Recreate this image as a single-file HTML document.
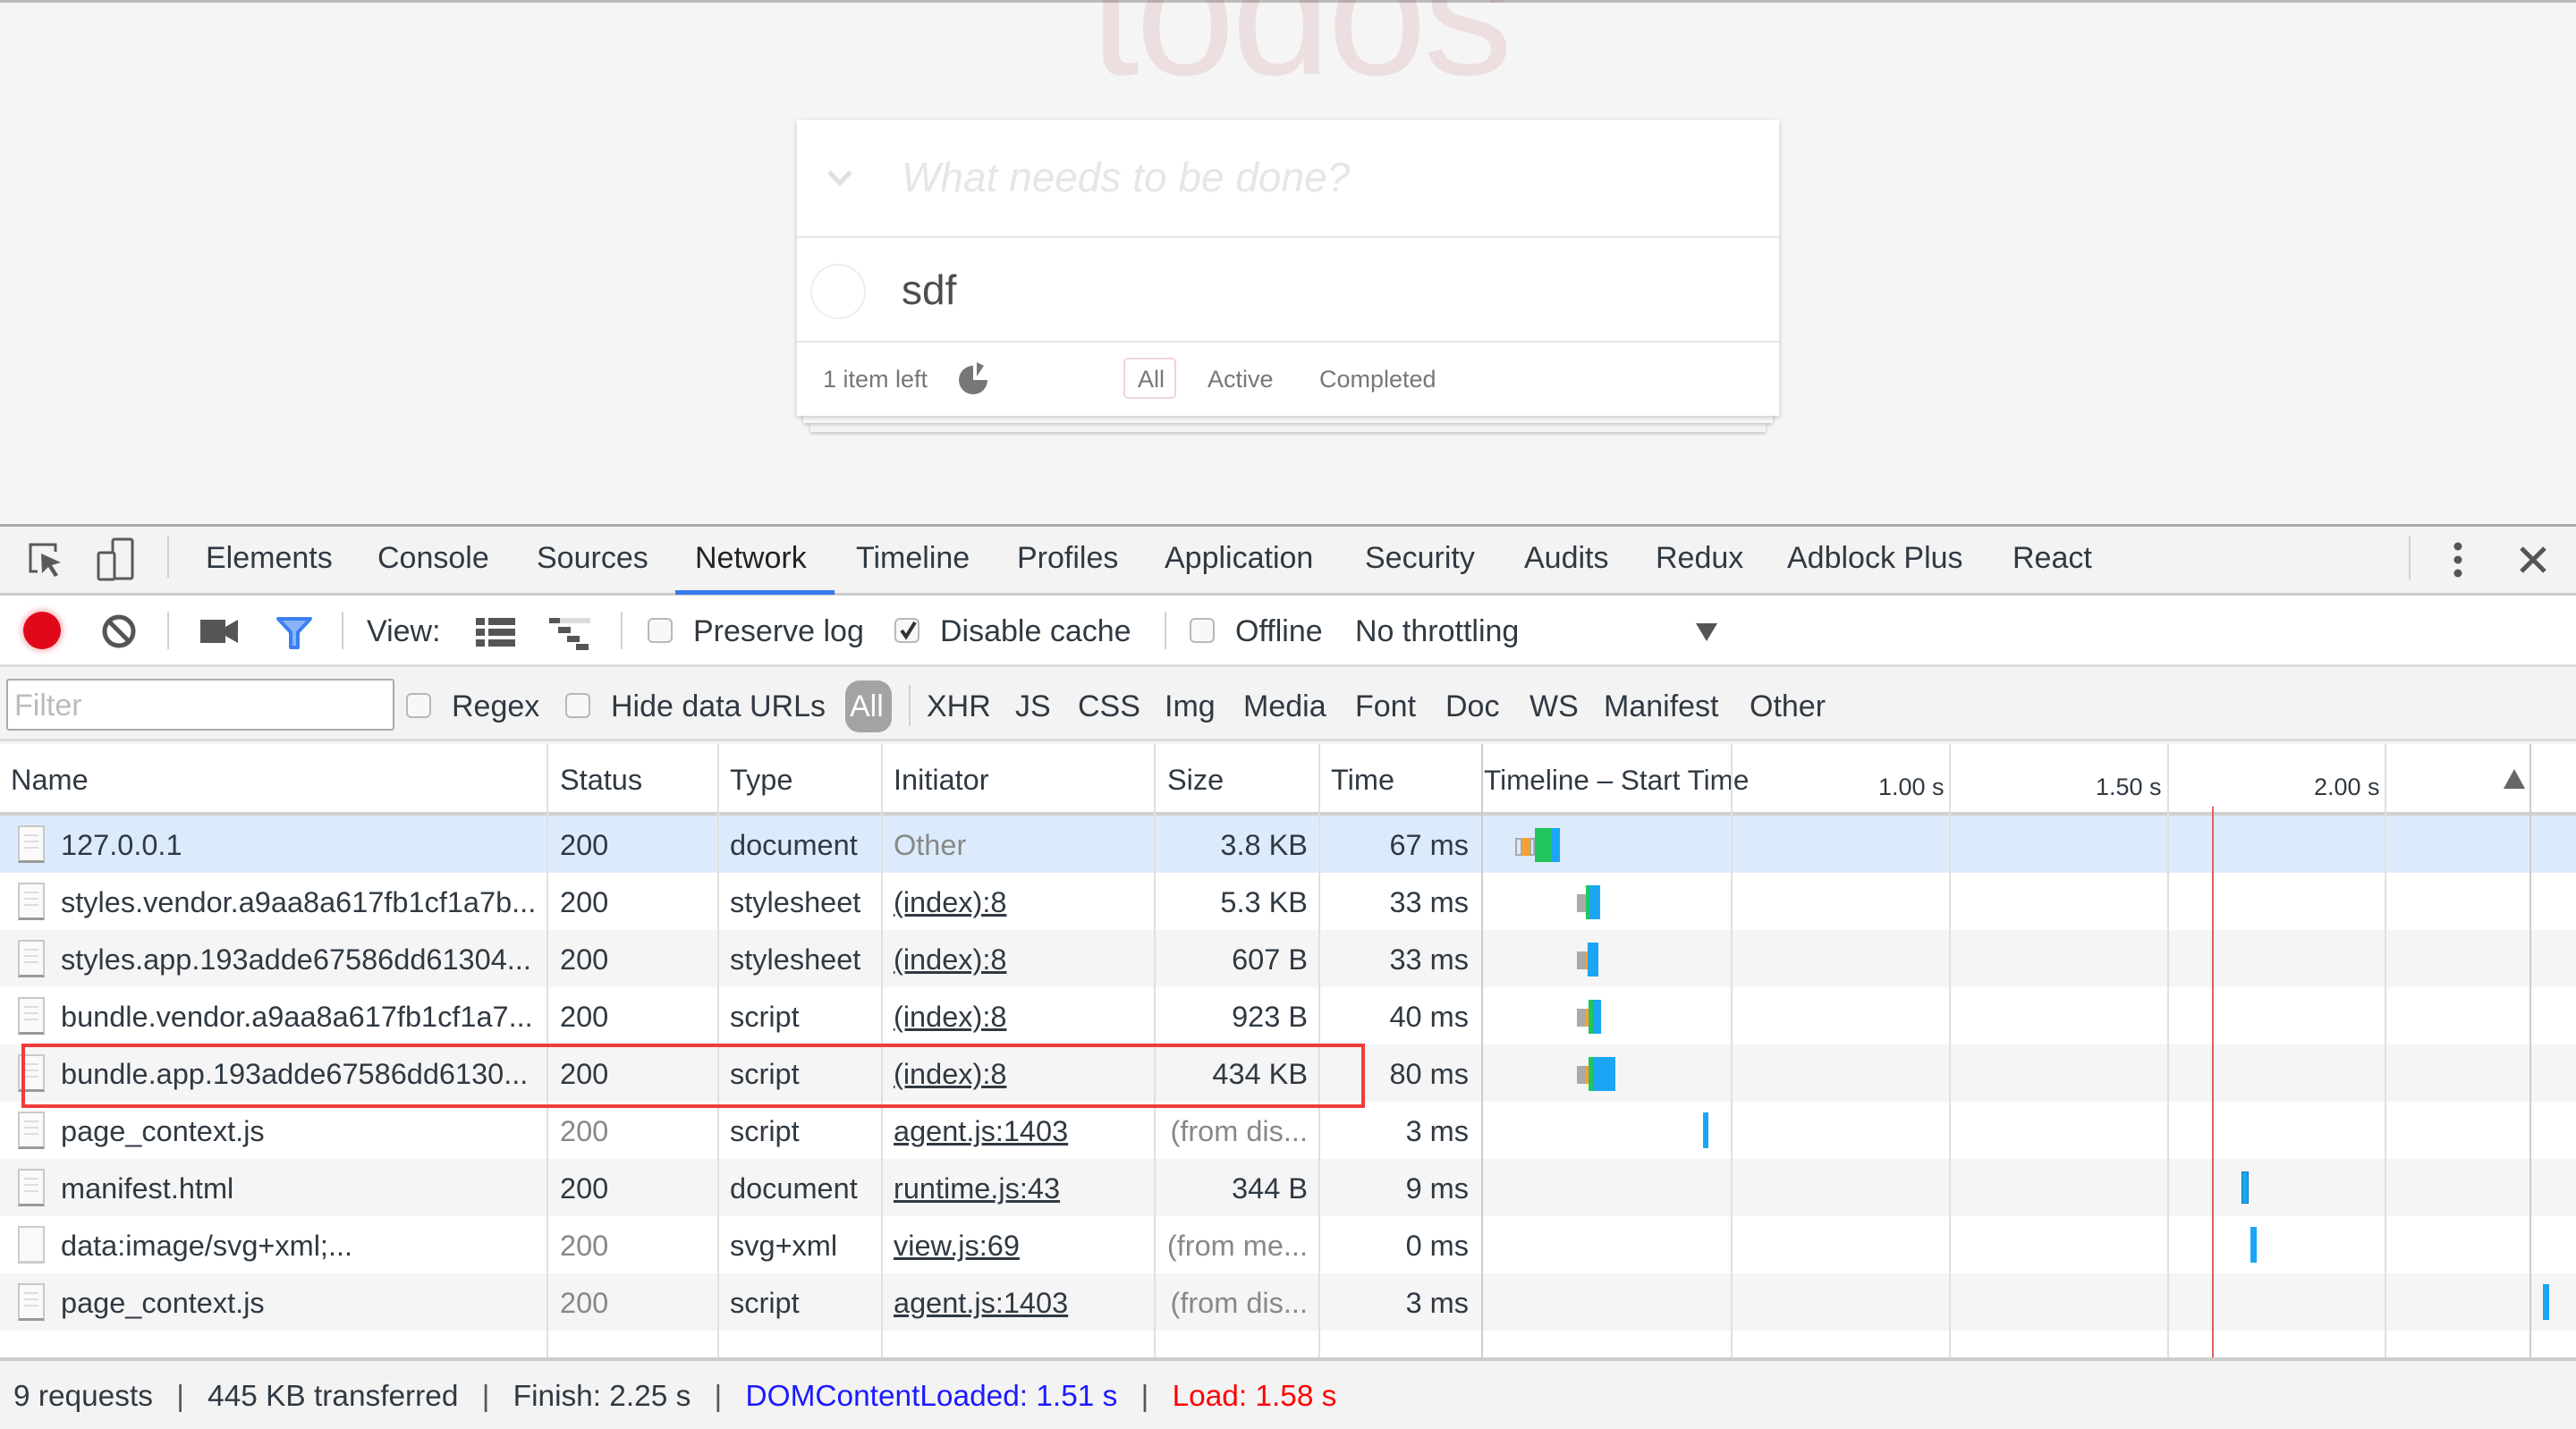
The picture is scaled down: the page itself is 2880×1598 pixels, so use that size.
<!DOCTYPE html>
<html><head><meta charset="utf-8">
<style>
*{margin:0;padding:0;box-sizing:border-box}
body{width:2880px;height:1598px;position:relative;overflow:hidden;background:#f5f5f5;font-family:"Liberation Sans",Helvetica,Arial,sans-serif;color:#303942}
.a{position:absolute;white-space:nowrap}
.t{font-size:34px;color:#303942}
.row{position:absolute;left:0;width:2880px;height:64px}
.c{position:absolute;top:1px;line-height:64px;font-size:32.5px;white-space:nowrap}
.u{text-decoration:underline}
.r{text-align:right}
.vl{position:absolute;width:2px;background:#e0e0e0}
.cb{position:absolute;width:28px;height:28px;border:2px solid #b8b8b8;border-radius:6px;background:#f8f8f8}
.sep{position:absolute;width:2px;background:#d0d0d0}
.doc{position:absolute;left:20px;top:11px;width:30px;height:42px;border:2px solid #c8c8c8;border-bottom:3px solid #999;background:#fafafa}
.doc i{position:absolute;left:5px;right:5px;height:2px;background:#ddd}
.bar{position:absolute}
</style></head><body>
<div class="a" style="left:0;top:0;width:2880px;height:3px;background:#bbb"></div>
<div class="a" style="left:1218px;top:-100px;font-size:200px;font-weight:100;color:rgba(175,47,47,0.11);letter-spacing:-4px;font-family:'Liberation Sans',sans-serif">todos</div>
<div class="a" style="left:906px;top:455px;width:1068px;height:28px;background:#f6f6f6;box-shadow:0 2px 4px rgba(0,0,0,.2)"></div>
<div class="a" style="left:898px;top:445px;width:1084px;height:28px;background:#fafafa;box-shadow:0 2px 4px rgba(0,0,0,.2)"></div>
<div class="a" style="left:891px;top:134px;width:1098px;height:331px;background:#fff;box-shadow:0 2px 6px rgba(0,0,0,.2)"></div>
<div class="a" style="left:891px;top:264px;width:1098px;height:2px;background:#e6e6e6"></div>
<div class="a" style="left:891px;top:381px;width:1098px;height:2px;background:#e6e6e6"></div>
<svg class="a" style="left:924px;top:188px" width="30" height="22"><path d="M3 4 L15 17 L27 4" stroke="#e0e0e0" stroke-width="5" fill="none"/></svg>
<div class="a" style="left:1008px;top:171px;font-size:46px;font-style:italic;font-weight:300;color:#e6e6e6">What needs to be done?</div>
<div class="a" style="left:906px;top:295px;width:62px;height:62px;border:2px solid #ededed;border-radius:50%"></div>
<div class="a" style="left:1008px;top:297px;font-size:46px;color:#4d4d4d">sdf</div>
<div class="a" style="left:920px;top:409px;font-size:27px;color:#777">1 item left</div>
<svg class="a" style="left:1070px;top:403px" width="40" height="42"><path d="M18 6 A16 16 0 1 0 34 22 L18 22 Z" fill="#777"/><path d="M22 2 L30 6 L22 18 Z" fill="#777"/></svg>
<div class="a" style="left:1256px;top:400px;width:59px;height:46px;border:2px solid rgba(175,47,47,.2);border-radius:5px"></div>
<div class="a" style="left:1272px;top:409px;font-size:27px;color:#777">All</div>
<div class="a" style="left:1350px;top:409px;font-size:27px;color:#777">Active</div>
<div class="a" style="left:1475px;top:409px;font-size:27px;color:#777">Completed</div>

<div class="a" style="left:0;top:586px;width:2880px;height:80px;background:#f3f3f3;border-top:3px solid #a8a8a8;border-bottom:3px solid #ccc"></div>
<svg class="a" style="left:28px;top:603px" width="46" height="48"><path d="M14 36 H6 V6 H34 V14" stroke="#5a5a5a" stroke-width="3" fill="none"/><path d="M18 16 L40 26 L30 29 L37 40 L33 42 L26 31 L19 38 Z" fill="#5a5a5a"/></svg>
<svg class="a" style="left:106px;top:600px" width="50" height="52"><rect x="20" y="3" width="22" height="44" rx="2" stroke="#5a5a5a" stroke-width="3" fill="none"/><rect x="4" y="18" width="18" height="30" rx="2" stroke="#5a5a5a" stroke-width="3" fill="#f3f3f3"/></svg>
<div class="sep" style="left:187px;top:600px;height:46px"></div>
<div class="a t" style="left:230px;top:605px">Elements</div>
<div class="a t" style="left:422px;top:605px">Console</div>
<div class="a t" style="left:600px;top:605px">Sources</div>
<div class="a t" style="left:777px;top:605px;color:#222">Network</div>
<div class="a" style="left:755px;top:660px;width:178px;height:5px;background:#3879f0"></div>
<div class="a t" style="left:957px;top:605px">Timeline</div>
<div class="a t" style="left:1137px;top:605px">Profiles</div>
<div class="a t" style="left:1302px;top:605px">Application</div>
<div class="a t" style="left:1526px;top:605px">Security</div>
<div class="a t" style="left:1704px;top:605px">Audits</div>
<div class="a t" style="left:1851px;top:605px">Redux</div>
<div class="a t" style="left:1998px;top:605px">Adblock Plus</div>
<div class="a t" style="left:2250px;top:605px">React</div>
<div class="sep" style="left:2693px;top:600px;height:48px"></div>
<svg class="a" style="left:2738px;top:604px" width="20" height="44"><circle cx="10" cy="7" r="4.5" fill="#555"/><circle cx="10" cy="22" r="4.5" fill="#555"/><circle cx="10" cy="37" r="4.5" fill="#555"/></svg>
<svg class="a" style="left:2815px;top:609px" width="34" height="34"><path d="M4 4 L30 30 M30 4 L4 30" stroke="#555" stroke-width="5"/></svg>

<div class="a" style="left:0;top:666px;width:2880px;height:80px;background:#fff;border-bottom:3px solid #ddd"></div>
<div class="a" style="left:26px;top:684px;width:42px;height:42px;border-radius:50%;background:#e0091a;box-shadow:0 0 6px 3px rgba(224,9,26,.25)"></div>
<svg class="a" style="left:112px;top:685px" width="42" height="42"><circle cx="21" cy="21" r="16" stroke="#555" stroke-width="5" fill="none"/><path d="M10 10 L32 32" stroke="#555" stroke-width="5"/></svg>
<div class="sep" style="left:187px;top:684px;height:42px"></div>
<svg class="a" style="left:224px;top:691px" width="44" height="30"><rect x="0" y="2" width="28" height="26" fill="#555"/><path d="M28 10 L42 2 V28 L28 20 Z" fill="#555"/></svg>
<svg class="a" style="left:308px;top:689px" width="42" height="38"><path d="M3 3 H39 L25 18 V35 H17 V18 Z" fill="#8ab4f8" stroke="#3b7ff0" stroke-width="4" stroke-linejoin="round"/></svg>
<div class="sep" style="left:382px;top:684px;height:42px"></div>
<div class="a t" style="left:410px;top:687px">View:</div>
<svg class="a" style="left:532px;top:691px" width="44" height="32"><g fill="#555"><rect x="0" y="0" width="10" height="8"/><rect x="14" y="0" width="30" height="8"/><rect x="0" y="12" width="10" height="8"/><rect x="14" y="12" width="30" height="8"/><rect x="0" y="24" width="10" height="8"/><rect x="14" y="24" width="30" height="8"/></g></svg>
<svg class="a" style="left:614px;top:691px" width="46" height="36"><rect x="0" y="0" width="46" height="6" fill="#ddd"/><rect x="0" y="0" width="12" height="6" fill="#555"/><rect x="10" y="10" width="14" height="7" fill="#555"/><rect x="20" y="20" width="14" height="7" fill="#555"/><rect x="30" y="29" width="14" height="7" fill="#555"/></svg>
<div class="sep" style="left:694px;top:684px;height:42px"></div>
<div class="cb" style="left:724px;top:691px"></div>
<div class="a t" style="left:775px;top:687px">Preserve log</div>
<div class="cb" style="left:1000px;top:691px"></div>
<svg class="a" style="left:1002px;top:691px" width="28" height="28"><path d="M6 14 L11 21 L21 5" stroke="#333" stroke-width="4" fill="none"/></svg>
<div class="a t" style="left:1051px;top:687px">Disable cache</div>
<div class="sep" style="left:1302px;top:684px;height:42px"></div>
<div class="cb" style="left:1330px;top:691px"></div>
<div class="a t" style="left:1381px;top:687px">Offline</div>
<div class="a t" style="left:1515px;top:687px">No throttling</div>
<svg class="a" style="left:1896px;top:697px" width="24" height="20"><path d="M0 0 H24 L12 20 Z" fill="#555"/></svg>

<div class="a" style="left:0;top:749px;width:2880px;height:80px;background:#f3f3f3;border-bottom:3px solid #ddd"></div>
<div class="a" style="left:7px;top:759px;width:434px;height:58px;background:#fff;border:2px solid #aaa;border-radius:3px"></div>
<div class="a" style="left:16px;top:770px;font-size:34px;color:#bbb">Filter</div>
<div class="cb" style="left:454px;top:775px"></div>
<div class="a t" style="left:505px;top:771px">Regex</div>
<div class="cb" style="left:632px;top:775px"></div>
<div class="a t" style="left:683px;top:771px">Hide data URLs</div>
<div class="a" style="left:945px;top:761px;width:52px;height:58px;border-radius:16px;background:#a3a3a3"></div>
<div class="a t" style="left:950px;top:771px;color:#fff">All</div>
<div class="sep" style="left:1016px;top:766px;height:46px"></div>
<div class="a t" style="left:1036px;top:771px">XHR</div>
<div class="a t" style="left:1135px;top:771px">JS</div>
<div class="a t" style="left:1205px;top:771px">CSS</div>
<div class="a t" style="left:1302px;top:771px">Img</div>
<div class="a t" style="left:1390px;top:771px">Media</div>
<div class="a t" style="left:1515px;top:771px">Font</div>
<div class="a t" style="left:1616px;top:771px">Doc</div>
<div class="a t" style="left:1710px;top:771px">WS</div>
<div class="a t" style="left:1793px;top:771px">Manifest</div>
<div class="a t" style="left:1956px;top:771px">Other</div>

<div class="a" style="left:0;top:832px;width:2880px;height:688px;background:#fff"></div>
<div class="a" style="left:0;top:908px;width:2880px;height:4px;background:#d0d0d0"></div>
<div class="a t" style="left:12px;top:854px;font-size:32.5px">Name</div>
<div class="a t" style="left:626px;top:854px;font-size:32.5px">Status</div>
<div class="a t" style="left:816px;top:854px;font-size:32.5px">Type</div>
<div class="a t" style="left:999px;top:854px;font-size:32.5px">Initiator</div>
<div class="a t" style="left:1305px;top:854px;font-size:32.5px">Size</div>
<div class="a t" style="left:1488px;top:854px;font-size:32.5px">Time</div>
<div class="a t" style="left:1659px;top:854px;font-size:31.5px">Timeline – Start Time</div>
<div class="a" style="left:2100px;top:865px;font-size:27px;width:73px;text-align:right">1.00 s</div>
<div class="a" style="left:2343px;top:865px;font-size:27px;width:73px;text-align:right">1.50 s</div>
<div class="a" style="left:2587px;top:865px;font-size:27px;width:73px;text-align:right">2.00 s</div>
<svg class="a" style="left:2799px;top:860px" width="24" height="22"><path d="M12 0 L24 22 H0 Z" fill="#666"/></svg>

<div class="row" style="top:912px;background:#dcebfc"></div>
<div class="row" style="top:976px;background:#fff"></div>
<div class="row" style="top:1040px;background:#f5f5f5"></div>
<div class="row" style="top:1104px;background:#fff"></div>
<div class="row" style="top:1168px;background:#f5f5f5"></div>
<div class="row" style="top:1232px;background:#fff"></div>
<div class="row" style="top:1296px;background:#f5f5f5"></div>
<div class="row" style="top:1360px;background:#fff"></div>
<div class="row" style="top:1424px;background:#f5f5f5"></div>

<div class="vl" style="left:611px;top:832px;height:688px"></div>
<div class="vl" style="left:802px;top:832px;height:688px"></div>
<div class="vl" style="left:985px;top:832px;height:688px"></div>
<div class="vl" style="left:1290px;top:832px;height:688px"></div>
<div class="vl" style="left:1474px;top:832px;height:688px"></div>
<div class="vl" style="left:1656px;top:832px;height:688px;background:#ccc"></div>
<div class="vl" style="left:1935px;top:832px;height:688px"></div>
<div class="vl" style="left:2179px;top:832px;height:688px"></div>
<div class="vl" style="left:2423px;top:832px;height:688px"></div>
<div class="vl" style="left:2666px;top:832px;height:688px"></div>
<div class="vl" style="left:2828px;top:832px;height:688px;background:#ccc"></div>
<div class="a" style="left:2473px;top:902px;width:2px;height:618px;background:#e06060"></div>

<div class="row" style="top:912px">
<div class="doc"><i style="top:8px"></i><i style="top:15px"></i><i style="top:22px"></i></div>
<div class="c" style="left:68px">127.0.0.1</div><div class="c" style="left:626px">200</div><div class="c" style="left:816px">document</div><div class="c" style="left:999px;color:#888">Other</div><div class="c r" style="left:1300px;width:162px">3.8 KB</div><div class="c r" style="left:1480px;width:162px">67 ms</div>
<div class="bar" style="left:1694px;top:25px;width:8px;height:20px;border:2px solid #aaa"></div><div class="bar" style="left:1702px;top:25px;width:8px;height:20px;background:#f7a030"></div><div class="bar" style="left:1710px;top:25px;width:6px;height:20px;border:2px solid #aaa"></div><div class="bar" style="left:1716px;top:14px;width:19px;height:38px;background:#22c55e"></div><div class="bar" style="left:1735px;top:14px;width:9px;height:38px;background:#1aa6f5"></div>
</div>
<div class="row" style="top:976px">
<div class="doc"><i style="top:8px"></i><i style="top:15px"></i><i style="top:22px"></i></div>
<div class="c" style="left:68px">styles.vendor.a9aa8a617fb1cf1a7b...</div><div class="c" style="left:626px">200</div><div class="c" style="left:816px">stylesheet</div><div class="c u" style="left:999px">(index):8</div><div class="c r" style="left:1300px;width:162px">5.3 KB</div><div class="c r" style="left:1480px;width:162px">33 ms</div>
<div class="bar" style="left:1763px;top:24px;width:10px;height:20px;background:#aaa"></div><div class="bar" style="left:1773px;top:14px;width:4px;height:38px;background:#22c55e"></div><div class="bar" style="left:1777px;top:14px;width:12px;height:38px;background:#1aa6f5"></div>
</div>
<div class="row" style="top:1040px">
<div class="doc"><i style="top:8px"></i><i style="top:15px"></i><i style="top:22px"></i></div>
<div class="c" style="left:68px">styles.app.193adde67586dd61304...</div><div class="c" style="left:626px">200</div><div class="c" style="left:816px">stylesheet</div><div class="c u" style="left:999px">(index):8</div><div class="c r" style="left:1300px;width:162px">607 B</div><div class="c r" style="left:1480px;width:162px">33 ms</div>
<div class="bar" style="left:1763px;top:24px;width:10px;height:20px;background:#aaa"></div><div class="bar" style="left:1773px;top:24px;width:2px;height:20px;background:#f7a030"></div><div class="bar" style="left:1775px;top:14px;width:12px;height:38px;background:#1aa6f5"></div>
</div>
<div class="row" style="top:1104px">
<div class="doc"><i style="top:8px"></i><i style="top:15px"></i><i style="top:22px"></i></div>
<div class="c" style="left:68px">bundle.vendor.a9aa8a617fb1cf1a7...</div><div class="c" style="left:626px">200</div><div class="c" style="left:816px">script</div><div class="c u" style="left:999px">(index):8</div><div class="c r" style="left:1300px;width:162px">923 B</div><div class="c r" style="left:1480px;width:162px">40 ms</div>
<div class="bar" style="left:1763px;top:24px;width:10px;height:20px;background:#aaa"></div><div class="bar" style="left:1773px;top:24px;width:3px;height:20px;background:#f7a030"></div><div class="bar" style="left:1776px;top:14px;width:5px;height:38px;background:#22c55e"></div><div class="bar" style="left:1781px;top:14px;width:9px;height:38px;background:#1aa6f5"></div>
</div>
<div class="row" style="top:1168px">
<div class="doc"><i style="top:8px"></i><i style="top:15px"></i><i style="top:22px"></i></div>
<div class="c" style="left:68px">bundle.app.193adde67586dd6130...</div><div class="c" style="left:626px">200</div><div class="c" style="left:816px">script</div><div class="c u" style="left:999px">(index):8</div><div class="c r" style="left:1300px;width:162px">434 KB</div><div class="c r" style="left:1480px;width:162px">80 ms</div>
<div class="bar" style="left:1763px;top:24px;width:10px;height:20px;background:#aaa"></div><div class="bar" style="left:1773px;top:24px;width:3px;height:20px;background:#f7a030"></div><div class="bar" style="left:1776px;top:14px;width:5px;height:38px;background:#22c55e"></div><div class="bar" style="left:1781px;top:14px;width:25px;height:38px;background:#1aa6f5"></div>
</div>
<div class="row" style="top:1232px">
<div class="doc"><i style="top:8px"></i><i style="top:15px"></i><i style="top:22px"></i></div>
<div class="c" style="left:68px">page_context.js</div><div class="c" style="left:626px;color:#888">200</div><div class="c" style="left:816px">script</div><div class="c u" style="left:999px">agent.js:1403</div><div class="c r" style="left:1300px;width:162px;color:#888">(from dis...</div><div class="c r" style="left:1480px;width:162px">3 ms</div>
<div class="bar" style="left:1904px;top:12px;width:6px;height:40px;background:#1aa6f5"></div>
</div>
<div class="row" style="top:1296px">
<div class="doc"><i style="top:8px"></i><i style="top:15px"></i><i style="top:22px"></i></div>
<div class="c" style="left:68px">manifest.html</div><div class="c" style="left:626px">200</div><div class="c" style="left:816px">document</div><div class="c u" style="left:999px">runtime.js:43</div><div class="c r" style="left:1300px;width:162px">344 B</div><div class="c r" style="left:1480px;width:162px">9 ms</div>
<div class="bar" style="left:2506px;top:14px;width:8px;height:36px;background:#1aa6f5;border:1px solid #1677b8"></div>
</div>
<div class="row" style="top:1360px">
<div class="doc" style="border-color:#ccc"></div>
<div class="c" style="left:68px">data:image/svg+xml;...</div><div class="c" style="left:626px;color:#888">200</div><div class="c" style="left:816px">svg+xml</div><div class="c u" style="left:999px">view.js:69</div><div class="c r" style="left:1300px;width:162px;color:#888">(from me...</div><div class="c r" style="left:1480px;width:162px">0 ms</div>
<div class="bar" style="left:2516px;top:12px;width:7px;height:40px;background:#1aa6f5"></div>
</div>
<div class="row" style="top:1424px">
<div class="doc"><i style="top:8px"></i><i style="top:15px"></i><i style="top:22px"></i></div>
<div class="c" style="left:68px">page_context.js</div><div class="c" style="left:626px;color:#888">200</div><div class="c" style="left:816px">script</div><div class="c u" style="left:999px">agent.js:1403</div><div class="c r" style="left:1300px;width:162px;color:#888">(from dis...</div><div class="c r" style="left:1480px;width:162px">3 ms</div>
<div class="bar" style="left:2843px;top:12px;width:7px;height:40px;background:#1aa6f5"></div>
</div>

<div class="a" style="left:24px;top:1167px;width:1502px;height:72px;border:4px solid #f03c3c"></div>

<div class="a" style="left:0;top:1518px;width:2880px;height:80px;background:#f3f3f3;border-top:4px solid #ccc"></div>
<div class="a" style="left:15px;top:1543px;font-size:33.4px;color:#303942">9 requests <span style="margin:0 17px;color:#555">|</span> 445 KB transferred <span style="margin:0 17px;color:#555">|</span> Finish: 2.25 s <span style="margin:0 17px;color:#555">|</span> <span style="color:#1a1aff">DOMContentLoaded: 1.51 s</span> <span style="margin:0 17px;color:#555">|</span> <span style="color:#f00">Load: 1.58 s</span></div>
</body></html>
